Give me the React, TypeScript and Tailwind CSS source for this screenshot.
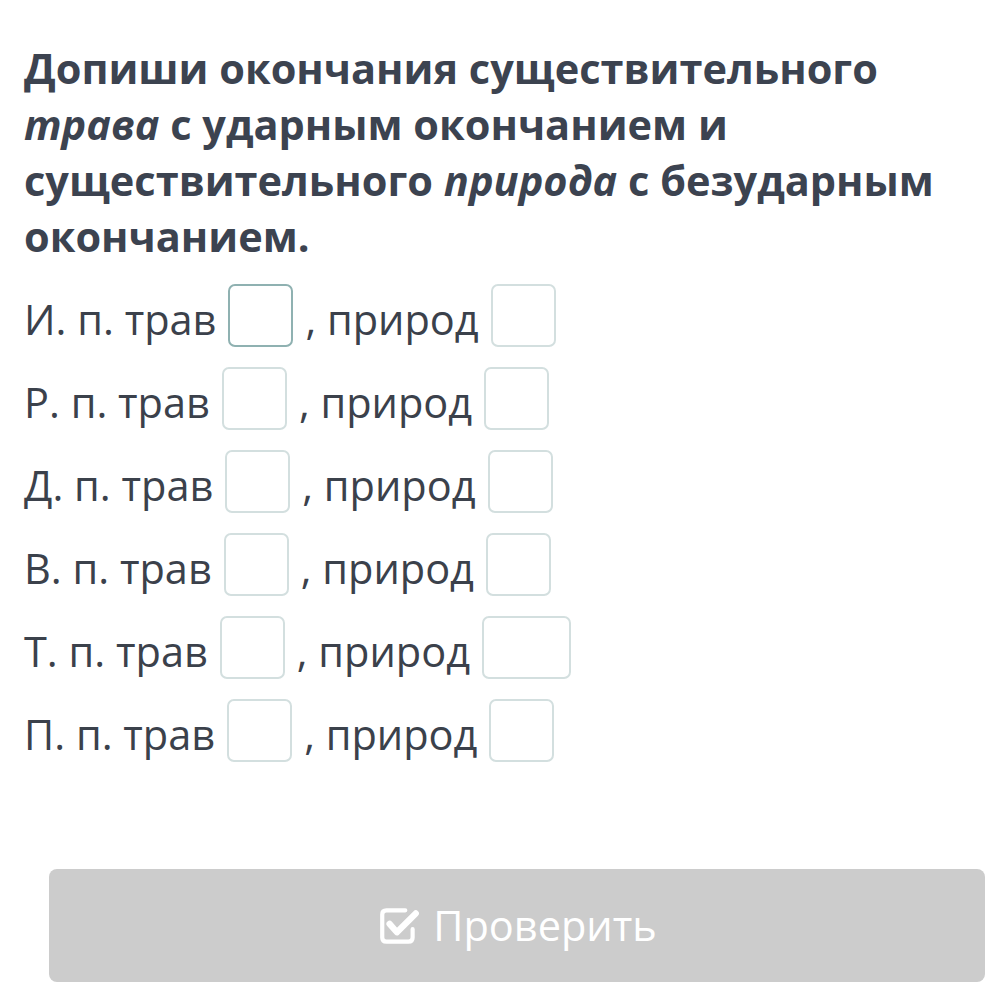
const rows = [
  { label: "И. п. трав", first: true, wide: false },
  { label: "Р. п. трав", first: false, wide: false },
  { label: "Д. п. трав", first: false, wide: false },
  { label: "В. п. трав", first: false, wide: false },
  { label: "Т. п. трав", first: false, wide: true },
  { label: "П. п. трав", first: false, wide: false },
];

function Blank({ active, wide }: { active?: boolean; wide?: boolean }) {
  return (
    <span
      className={
        "inline-block h-[63px] shrink-0 rounded-[7px] border-2 bg-white " +
        (wide ? "w-[89px] " : "w-[65px] ") +
        (active ? "border-[#8fb1b1]" : "border-[#d3dfdf]")
      }
    />
  );
}

function CheckIcon() {
  return (
    <svg width="44" height="42" viewBox="0 0 42 40" fill="none">
      <path
        d="M27 5 H9 Q5 5 5 9 V31 Q5 35 9 35 H30 Q34 35 34 31 V23"
        stroke="white"
        strokeWidth="4"
        strokeLinecap="round"
      />
      <path
        d="M12 18 L19 26 L37 8"
        stroke="white"
        strokeWidth="6"
        strokeLinecap="round"
        strokeLinejoin="round"
      />
    </svg>
  );
}

export default function App() {
  return (
    <div className="min-h-screen bg-white font-['Open_Sans',sans-serif] text-[#3b414b]">
      <div className="px-6 pt-10">
        <h1 className="text-[41.5px] font-bold leading-[56px] text-[#3c4350]">
          Допиши окончания существительного <em>трава</em> с ударным окончанием и
          существительного <em>природа</em> с безударным окончанием.
        </h1>

        <div className="mt-5 flex flex-col gap-[20px]">
          {rows.map((r) => (
            <div key={r.label} className="flex h-[63px] items-center gap-3 text-[41.5px]">
              <span className="pt-[8px]">{r.label}</span>
              <Blank active={r.first} />
              <span className="pt-[8px]">, природ</span>
              <Blank wide={r.wide} />
            </div>
          ))}
        </div>
      </div>

      <div className="ml-[49px] mr-[14px] mt-[107px] flex h-[113px] items-center justify-center gap-3 rounded-[8px] bg-[#cccccc] text-[41.5px] text-white">
        <CheckIcon />
        <span>Проверить</span>
      </div>
    </div>
  );
}
